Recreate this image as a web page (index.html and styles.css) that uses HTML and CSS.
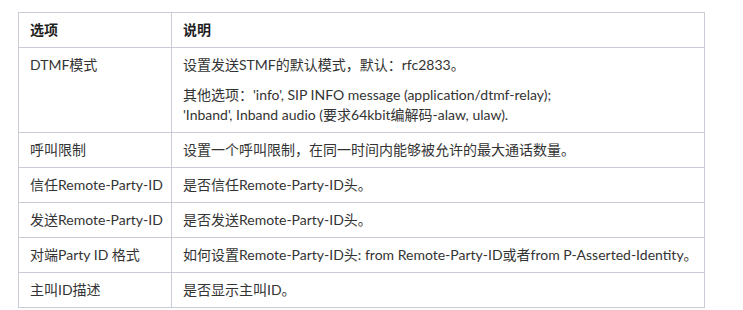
FILE: index.html
```html
<!DOCTYPE html>
<html lang="zh-CN">
<head>
<meta charset="utf-8">
<title>选项说明</title>
<link rel="stylesheet" href="styles.css">
</head>
<body>
<div class="page">
  <table class="opts">
    <colgroup>
      <col class="c1">
      <col class="c2">
    </colgroup>
    <thead>
      <tr><th>选项</th><th>说明</th></tr>
    </thead>
    <tbody>
      <tr>
        <td>DTMF模式</td>
        <td>
          <p>设置发送STMF的默认模式，默认：rfc2833。</p>
          <p>其他选项：'info', SIP INFO message (application/dtmf-relay);<br>'Inband', Inband audio (要求64kbit编解码-alaw, ulaw).</p>
        </td>
      </tr>
      <tr><td>呼叫限制</td><td>设置一个呼叫限制，在同一时间内能够被允许的最大通话数量。</td></tr>
      <tr><td>信任Remote-Party-ID</td><td>是否信任Remote-Party-ID头。</td></tr>
      <tr><td>发送Remote-Party-ID</td><td>是否发送Remote-Party-ID头。</td></tr>
      <tr><td>对端Party ID 格式</td><td>如何设置Remote-Party-ID头: from Remote-Party-ID或者from P-Asserted-Identity。</td></tr>
      <tr><td>主叫ID描述</td><td>是否显示主叫ID。</td></tr>
    </tbody>
  </table>
</div>
</body>
</html>
```
FILE: styles.css
```css
html, body {
  margin: 0;
  padding: 0;
  background: #ffffff;
}
body {
  font-family: "Lato", "Noto Sans CJK SC", sans-serif;
  font-size: 14px;
  color: #333333;
}
.page {
  padding: 12px 18px 0 18px;
}
.opts {
  border-collapse: collapse;
  table-layout: fixed;
  width: 687px;
}
.opts .c1 { width: 153px; }
.opts th,
.opts td {
  border: 1px solid #c9ccd6;
  padding: 7px 11px;
  line-height: 20px;
  text-align: left;
  vertical-align: top;
  white-space: nowrap;
}
.opts th {
  font-weight: bold;
  color: #1f1f1f;
}
.opts p {
  margin: 0;
}
.opts p + p {
  margin-top: 10px;
}
```
